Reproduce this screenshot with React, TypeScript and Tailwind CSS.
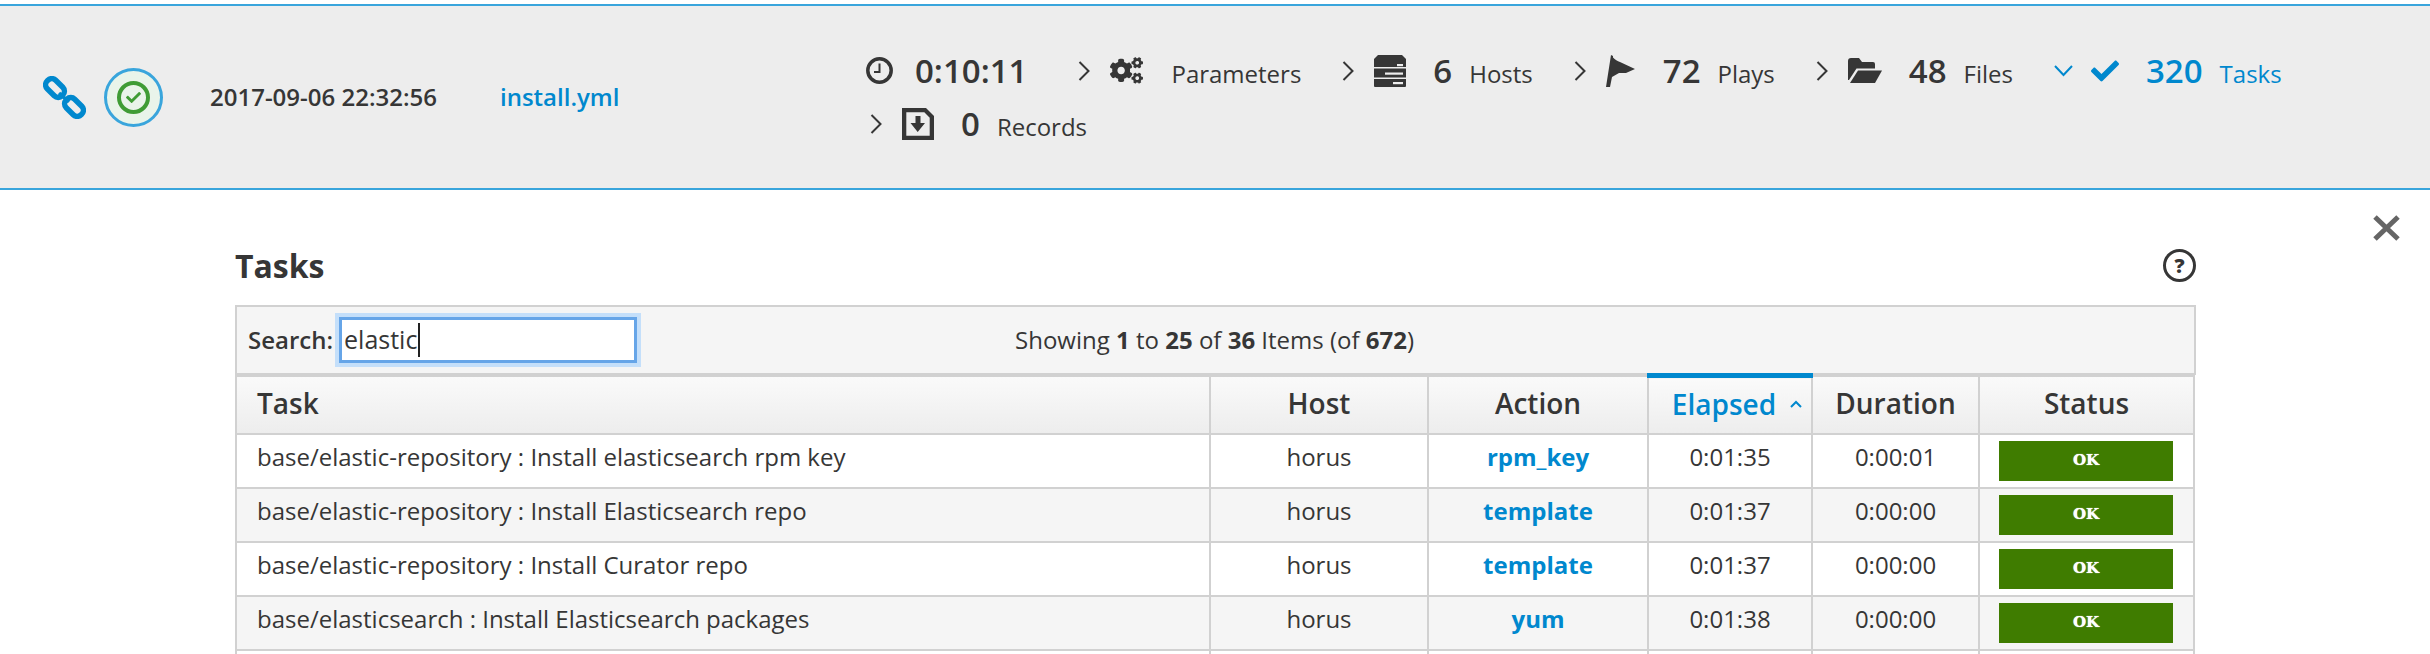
import type { ReactNode } from "react";
import { FaCheck, FaCogs } from "react-icons/fa";

const rows = [
  { task: "base/elastic-repository : Install elasticsearch rpm key", action: "rpm_key", elapsed: "0:01:35", duration: "0:00:01" },
  { task: "base/elastic-repository : Install Elasticsearch repo", action: "template", elapsed: "0:01:37", duration: "0:00:00" },
  { task: "base/elastic-repository : Install Curator repo", action: "template", elapsed: "0:01:37", duration: "0:00:00" },
  { task: "base/elasticsearch : Install Elasticsearch packages", action: "yum", elapsed: "0:01:38", duration: "0:00:00" },
];

function Chevron({ down }: { down?: boolean }) {
  if (down) {
    return (
      <svg viewBox="0 0 19 12" className="w-[19px] h-[12px] mr-[18px]" fill="none" stroke="#0088ce" strokeWidth="2">
        <path d="M1 1l8.500 9L18 1" />
      </svg>
    );
  }
  return (
    <svg viewBox="0 0 12 20" className="w-[12px] h-[20px] mr-[20px]" fill="none" stroke="#363636" strokeWidth="2">
      <path d="M1.500 1l9 9-9 9" />
    </svg>
  );
}

function LinkIcon() {
  return (
    <svg viewBox="0 0 43 43" className="w-[43px] h-[43px]" fill="none" stroke="#0088ce" strokeWidth="5.500">
      <rect x="1.500" y="6" width="21" height="12" rx="5.500" transform="rotate(45 12 12)" />
      <rect x="20.500" y="25" width="21" height="12" rx="5.500" transform="rotate(45 31 31)" />
      <path d="M16 17l10 9" strokeWidth="3.500" />
    </svg>
  );
}

function ClockIcon() {
  return (
    <svg viewBox="0 0 27 27" className="mr-[-5px] h-[27px] w-[27px]" fill="none" stroke="#363636">
      <circle cx="13.500" cy="13.500" r="11.700" strokeWidth="3.500" />
      <path d="M13.500 6.500v8.500H8" strokeWidth="2" />
    </svg>
  );
}

function ServerIcon() {
  return (
    <svg viewBox="0 0 32 32" className="w-[32px] h-[32px]" fill="#363636">
      <path d="M4 0h24l4 4v8H0V4z" />
      <rect x="0" y="13.500" width="32" height="9" />
      <path d="M0 24h32v7a1 1 0 0 1-1 1H1a1 1 0 0 1-1-1z" />
      <rect x="23" y="9" width="6" height="2.200" fill="#ededed" />
      <rect x="11" y="17.500" width="18" height="2.200" fill="#ededed" />
      <rect x="19" y="27" width="10" height="2.200" fill="#ededed" />
    </svg>
  );
}

function FlagIcon() {
  return (
    <svg viewBox="0 0 30 32" className="w-[30px] h-[32px]" fill="#363636">
      <path d="M5 0l2 1v1.500c2 2 4.500 3.500 7 4.500l15 7-9 4h-7l-7 4L4 32H0z" />
    </svg>
  );
}

function FolderIcon() {
  return (
    <svg viewBox="0 0 34 25" className="w-[34px] h-[25px]" fill="#363636">
      <path d="M0 3a3 3 0 0 1 3-3h8l3 4h11a2 2 0 0 1 2 2v4.500H8.500L1 22H0z" />
      <path d="M10 12.500h24L27 25H2z" />
    </svg>
  );
}

function RecordsIcon() {
  return (
    <svg viewBox="0 0 32 32" className="w-[32px] h-[32px]">
      <path d="M0 0h24l8 8v24H0z" fill="#363636" />
      <path d="M4.300 4.300h18l5.400 5.400v18H4.300z" fill="#ededed" />
      <path d="M13.500 8h5v7H23l-7.300 9L8.500 15h5z" fill="#363636" />
    </svg>
  );
}

function CloseIcon() {
  return (
    <svg viewBox="0 0 27 26" className="w-[27px] h-[26px]" fill="none" stroke="#656565" strokeWidth="5">
      <path d="M2 2l23 22M25 2L2 24" />
    </svg>
  );
}

function Stat({ chevron, icon, value, label, blue, className }: { chevron?: "right" | "down"; icon: ReactNode; value?: string; label?: string; blue?: boolean; className?: string }) {
  return (
    <div className={`flex items-center h-[53px] mr-[41px] ${blue ? "text-[#0088ce]" : "text-[#363636]"} ${className ?? ""}`}>
      {chevron && <Chevron down={chevron === "down"} />}
      {icon}
      {value && <span className="ml-[27px] text-[33px] font-semibold">{value}</span>}
      {label && <span className="ml-[17px] mt-[7px] text-[24px]">{label}</span>}
    </div>
  );
}

function HeaderCell({ children, active }: { children: ReactNode; active?: boolean }) {
  return (
    <th className={`border-2 border-[#d1d1d1] bg-gradient-to-b from-[#fafafa] to-[#ededed] pb-[3px] text-[28px] font-semibold text-center ${active ? "border-t-[5px] border-t-[#0088ce] text-[#0088ce]" : "text-[#363636]"}`}>
      {children}
    </th>
  );
}

export default function App() {
  return (
    <div className="h-[654px] w-[2430px] overflow-hidden bg-white pt-1 font-['Open_Sans',sans-serif] text-[#363636]">
      <header className="flex h-[186px] items-center border-y-2 border-[#39a5dc] bg-[#ededed] pl-[43px]">
        <LinkIcon />
        <div className="ml-[18px] flex h-[59px] w-[59px] items-center justify-center rounded-full border-[3px] border-[#39a5dc] bg-[#e9f4ea]">
          <div className="flex h-[33px] w-[33px] items-center justify-center rounded-full border-[4px] border-[#3f9c35] text-[#3f9c35]">
            <FaCheck className="h-[15px] w-[15px]" />
          </div>
        </div>
        <span className="ml-[47px] w-[290px] text-[24px] font-semibold">2017-09-06 22:32:56</span>
        <span className="w-[366px] text-[24px] font-semibold text-[#0088ce]">install.yml</span>
        <div className="flex w-[1530px] flex-wrap">
          <Stat icon={<ClockIcon />} value="0:10:11" />
          <Stat chevron="right" icon={<FaCogs className="h-[33px] w-[33px]" />} label="Parameters" className="ml-[10px] [&>span]:ml-[28px]" />
          <Stat chevron="right" icon={<ServerIcon />} value="6" label="Hosts" />
          <Stat chevron="right" icon={<FlagIcon />} value="72" label="Plays" />
          <Stat chevron="right" icon={<FolderIcon />} value="48" label="Files" />
          <Stat chevron="down" blue icon={<FaCheck className="h-[28px] w-[28px]" />} value="320" label="Tasks" />
          <Stat chevron="right" icon={<RecordsIcon />} value="0" label="Records" className="ml-[4px]" />
        </div>
      </header>

      <main className="relative pl-[235px] pr-[234px]">
        <div className="absolute right-[30px] top-[25px]">
          <CloseIcon />
        </div>
        <div className="flex h-[115px] items-center justify-between pt-[36px]">
          <h1 className="text-[32px] font-bold">Tasks</h1>
          <div className="flex h-[33px] w-[33px] items-center justify-center rounded-full border-[3px] border-[#363636] text-[20px] font-extrabold">?</div>
        </div>

        <div className="flex h-[70px] items-center border-2 border-[#d1d1d1] bg-[#f5f5f5] pl-[11px]">
          <label className="text-[24px] font-semibold">Search:</label>
          <div className="ml-[6px] flex h-[46px] w-[298px] items-center border-[3px] border-[#66a5e8] bg-white pl-[2px] text-[25px] shadow-[0_0_0_4px_#c4dffa]">
            elastic
            <span className="ml-px h-[34px] w-[2px] bg-[#222]" />
          </div>
          <div className="ml-[378px] text-[24px]">
            Showing <b className="font-bold">1</b> to <b className="font-bold">25</b> of <b className="font-bold">36</b> Items (of <b className="font-bold">672</b>)
          </div>
        </div>

        <table className="-mt-[2px] w-[1958px] table-fixed border-collapse">
          <colgroup>
            <col className="w-[974px]" />
            <col className="w-[218px]" />
            <col className="w-[220px]" />
            <col className="w-[164px]" />
            <col className="w-[167px]" />
            <col className="w-[215px]" />
          </colgroup>
          <thead>
            <tr className="h-[58px]">
              <th className="border-2 border-[#d1d1d1] bg-gradient-to-b from-[#fafafa] to-[#ededed] pb-[3px] pl-[20px] text-left text-[28px] font-semibold">Task</th>
              <HeaderCell>Host</HeaderCell>
              <HeaderCell>Action</HeaderCell>
              <HeaderCell active>
                <span className="inline-flex items-center gap-[14px] pl-[14px]">
                  Elapsed
                  <svg viewBox="0 0 12 8" className="h-[8px] w-[12px]" fill="none" stroke="#0088ce" strokeWidth="2">
                    <path d="M1 7l5-5 5 5" />
                  </svg>
                </span>
              </HeaderCell>
              <HeaderCell>Duration</HeaderCell>
              <HeaderCell>Status</HeaderCell>
            </tr>
          </thead>
          <tbody>
            {rows.map((row, i) => (
              <tr key={i} className={`h-[54px] text-[24px] ${i % 2 === 1 ? "bg-[#f5f5f5]" : "bg-white"}`}>
                <td className="border-2 border-[#d1d1d1] pb-[7px] pl-[20px]">{row.task}</td>
                <td className="border-2 border-[#d1d1d1] pb-[7px] text-center">horus</td>
                <td className="border-2 border-[#d1d1d1] pb-[7px] text-center font-bold text-[#0088ce]">{row.action}</td>
                <td className="border-2 border-[#d1d1d1] pb-[7px] text-center">{row.elapsed}</td>
                <td className="border-2 border-[#d1d1d1] pb-[7px] text-center">{row.duration}</td>
                <td className="border-2 border-[#d1d1d1] pl-[19px] pr-[20px]">
                  <div className="flex h-[40px] items-center justify-center bg-[#3f7c00] font-['DejaVu_Serif',serif] text-[15px] font-bold text-white [text-shadow:0_0_1px_#fff]">OK</div>
                </td>
              </tr>
            ))}
            <tr className="h-[54px]">
              {[0, 1, 2, 3, 4, 5].map((c) => (
                <td key={c} className="border-2 border-[#d1d1d1]" />
              ))}
            </tr>
          </tbody>
        </table>
      </main>
    </div>
  );
}
